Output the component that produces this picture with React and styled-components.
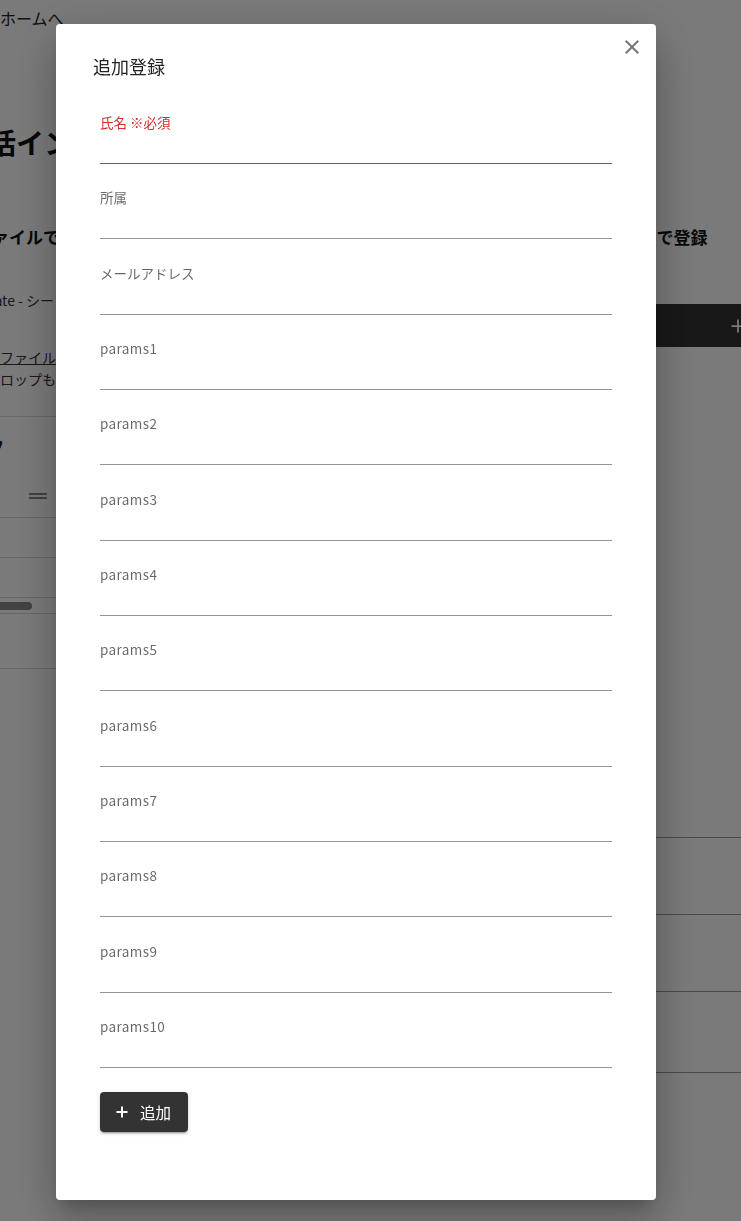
import React from "react";
import styled, { createGlobalStyle } from "styled-components";

const GlobalStyle = createGlobalStyle`
  html, body { margin: 0; padding: 0; background: #fff; }
  body {
    font-family: "Noto Sans CJK JP", "Noto Sans", sans-serif;
    color: #222;
    overflow: hidden;
  }
  * { box-sizing: border-box; }
`;

const Page = styled.div`
  width: 741px;
  height: 1221px;
  overflow: hidden;
`;

const HomeLink = styled.div`
  padding-top: 8px;
  font-size: 16px;
  line-height: 20px;
  color: #222;
`;

const Main = styled.div`
  margin-left: -40px;
  width: 1200px;
`;

const PageTitle = styled.h1`
  margin: 94px 0 0;
  font-size: 28px;
  line-height: 40px;
  font-weight: 700;
  color: #111;
`;

const Columns = styled.div`
  display: grid;
  grid-template-columns: 440px 632px;
  column-gap: 34px;
  margin: 61px 0 0 22px;
`;

const Col = styled.div`
  display: flex;
  flex-direction: column;
`;

const SectionTitle = styled.h2`
  margin: 0;
  font-size: 17px;
  line-height: 28px;
  font-weight: 700;
  color: #111;
`;

const LeftTitle = styled(SectionTitle)`
  margin-left: -7px;
`;

const RightTitle = styled(SectionTitle)`
  margin-left: 14px;
`;

const Muted = styled.div`
  margin: 39px 0 0 -26px;
  font-size: 14px;
  line-height: 20px;
  color: #333;
`;

const Hint = styled.div`
  margin-top: 36px;
  font-size: 14px;
  line-height: 22px;
  color: #333;
`;

const HintLine = styled.div`
  padding-left: ${(p) => p.$indent}px;
  text-decoration: ${(p) => (p.$link ? "underline" : "none")};
`;

const DataGrid = styled.div`
  margin: 26px 0 0 -78px;
  border-top: 1px solid #d8d8d8;
  width: 520px;
`;

const GridToolbar = styled.div`
  height: 57px;
  display: flex;
  align-items: center;
  padding-left: 10px;
  font-size: 15px;
  font-weight: 700;
  color: #111;
`;

const GridHead = styled.div`
  height: 44px;
  display: flex;
  align-items: center;
  padding-left: 125px;
  border-bottom: 1px solid #d8d8d8;
`;

const HandleIcon = styled.span`
  display: block;
  width: 18px;
  height: 6px;
  border-top: 2px solid #888;
  border-bottom: 2px solid #888;
`;

const GridRow = styled.div`
  height: 40px;
  border-bottom: 1px solid #d8d8d8;
`;

const ScrollTrack = styled.div`
  height: 16px;
  display: flex;
  align-items: center;
  padding-left: 60px;
  border-bottom: 1px solid #d8d8d8;
`;

const ScrollThumb = styled.div`
  width: 68px;
  height: 8px;
  border-radius: 4px;
  background: #8a8a8a;
`;

const GridFooter = styled.div`
  height: 55px;
  border-bottom: 1px solid #d8d8d8;
`;

const DarkBar = styled.div`
  margin-top: 53px;
  height: 43px;
  background: #333;
  color: #fff;
  display: flex;
  align-items: center;
  justify-content: center;
  gap: 8px;
  font-size: 15px;
  border-radius: 4px;
`;

const RowsTable = styled.div`
  margin-top: 414px;
`;

const TableRow = styled.div`
  height: ${(p) => p.$h}px;
  border-bottom: 1px solid #9a9a9a;
`;

const Overlay = styled.div`
  position: fixed;
  inset: 0;
  background: rgba(0, 0, 0, 0.52);
  display: flex;
  justify-content: center;
  align-items: flex-start;
  padding: 24px 29px 0 0;
`;

const Dialog = styled.div`
  position: relative;
  width: 600px;
  background: #fff;
  border-radius: 4px;
  padding-bottom: 68px;
  box-shadow: 0 11px 15px -7px rgba(0, 0, 0, 0.2),
    0 24px 38px 3px rgba(0, 0, 0, 0.14), 0 9px 46px 8px rgba(0, 0, 0, 0.12);
`;

const CloseButton = styled.button`
  position: absolute;
  top: 11px;
  right: 12px;
  width: 24px;
  height: 24px;
  padding: 0;
  border: 0;
  background: transparent;
  color: rgba(0, 0, 0, 0.54);
  cursor: pointer;
  display: flex;
`;

const DialogTitle = styled.h2`
  margin: 0;
  padding: 28px 0 0 37px;
  font-size: 18px;
  line-height: 28px;
  font-weight: 400;
  color: rgba(0, 0, 0, 0.87);
`;

const Form = styled.div`
  margin-top: 32px;
  padding: 0 44px;
  display: flex;
  flex-direction: column;
  gap: 23.33px;
`;

const Field = styled.label`
  display: flex;
  flex-direction: column;
`;

const FieldLabel = styled.span`
  font-size: 13.5px;
  line-height: 20px;
  letter-spacing: ${(p) => (p.$latin ? "0.4px" : "0")};
  color: ${(p) => (p.$error ? "#d32f2f" : "rgba(0, 0, 0, 0.6)")};
`;

const InputBox = styled.div`
  height: 32px;
  border-bottom-width: 1px;
  border-bottom-style: solid;
  border-bottom-color: ${(p) => (p.$error ? "#d32f2f" : "rgba(0, 0, 0, 0.42)")};
`;

const Input = styled.input`
  width: 100%;
  height: 31px;
  border: 0;
  outline: none;
  padding: 4px 0;
  font: inherit;
  font-size: 16px;
  background: transparent;
`;

const Actions = styled.div`
  padding: 24px 44px 0;
  display: flex;
`;

const AddButton = styled.button`
  height: 40px;
  width: 88px;
  padding: 0 16px;
  display: flex;
  align-items: center;
  gap: 12px;
  border: 0;
  border-radius: 4px;
  background: #333;
  color: #fff;
  font-family: "Noto Sans CJK JP", sans-serif;
  font-size: 15.5px;
  cursor: pointer;
  box-shadow: 0 3px 1px -2px rgba(0, 0, 0, 0.2), 0 2px 2px 0 rgba(0, 0, 0, 0.14),
    0 1px 5px 0 rgba(0, 0, 0, 0.12);
`;

const PlusIcon = ({ size = 12, stroke = 2 }) => (
  <svg width={size} height={size} viewBox="0 0 12 12" fill="none">
    <path d="M6 0.5v11M0.5 6h11" stroke="currentColor" strokeWidth={stroke} />
  </svg>
);

const CloseIcon = () => (
  <svg width="24" height="24" viewBox="0 0 24 24" fill="currentColor">
    <path d="M19 6.41 17.59 5 12 10.59 6.41 5 5 6.41 10.59 12 5 17.59 6.41 19 12 13.41 17.59 19 19 17.59 13.41 12z" />
  </svg>
);

const fields = [
  { label: "氏名 ※必須", error: true },
  { label: "所属" },
  { label: "メールアドレス" },
  ...Array.from({ length: 10 }, (_, i) => ({
    label: `params${i + 1}`,
    latin: true,
  })),
];

export default function App() {
  return (
    <>
      <GlobalStyle />
      <Page>
        <HomeLink>ホームへ</HomeLink>
        <Main>
          <PageTitle>一括インポート</PageTitle>
          <Columns>
            <Col>
              <LeftTitle>ファイルで一括登録</LeftTitle>
              <Muted>template - シート1</Muted>
              <Hint>
                <HintLine $indent={18} $link>
                  ファイルは選択してください
                </HintLine>
                <HintLine $indent={4}>ドロップも可能です</HintLine>
              </Hint>
              <DataGrid>
                <GridToolbar>シートグラフ</GridToolbar>
                <GridHead>
                  <HandleIcon />
                </GridHead>
                <GridRow />
                <GridRow />
                <ScrollTrack>
                  <ScrollThumb />
                </ScrollTrack>
                <GridFooter />
              </DataGrid>
            </Col>
            <Col>
              <RightTitle>フォームから個別に手動で登録</RightTitle>
              <DarkBar>
                <PlusIcon size={14} stroke={1.5} />
                行を追加
              </DarkBar>
              <RowsTable>
                <TableRow $h={77} />
                <TableRow $h={77} />
                <TableRow $h={77} />
                <TableRow $h={81} />
              </RowsTable>
            </Col>
          </Columns>
        </Main>
      </Page>
      <Overlay>
        <Dialog role="dialog" aria-labelledby="dlg-title">
          <CloseButton aria-label="close">
            <CloseIcon />
          </CloseButton>
          <DialogTitle id="dlg-title">追加登録</DialogTitle>
          <Form>
            {fields.map((f) => (
              <Field key={f.label}>
                <FieldLabel $error={f.error} $latin={f.latin}>
                  {f.label}
                </FieldLabel>
                <InputBox $error={f.error}>
                  <Input type="text" />
                </InputBox>
              </Field>
            ))}
          </Form>
          <Actions>
            <AddButton>
              <PlusIcon />
              追加
            </AddButton>
          </Actions>
        </Dialog>
      </Overlay>
    </>
  );
}
